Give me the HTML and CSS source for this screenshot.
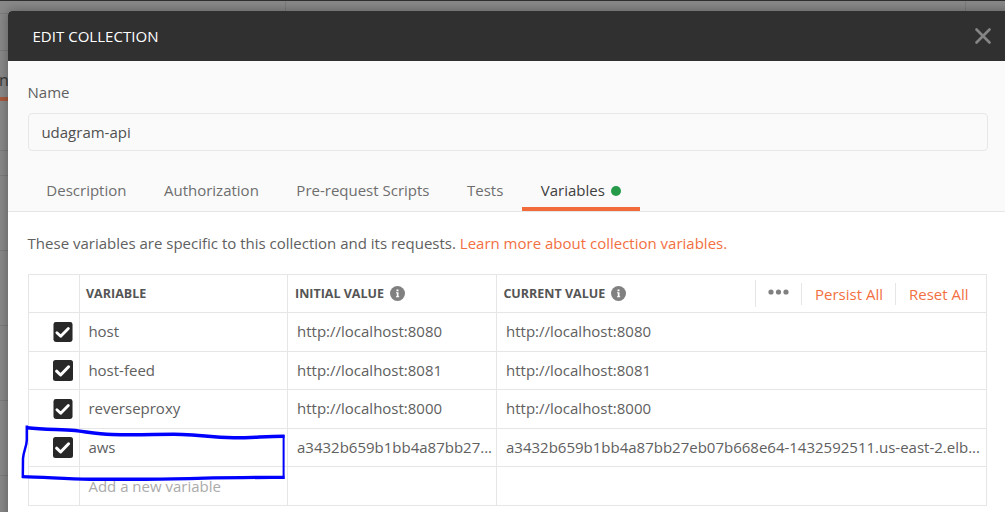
FILE: index.html
```html
<!DOCTYPE html>
<html lang="en">
<head>
<meta charset="utf-8">
<title>Edit collection</title>
<link rel="stylesheet" href="styles.css">
</head>
<body>
<svg class="defs" width="0" height="0">
  <symbol id="check" viewBox="0 0 20 21">
    <rect width="20" height="21" rx="2.5" fill="#282828"/>
    <path d="M3.6 11.2 7.6 15 15.6 6.8" fill="none" stroke="#fff" stroke-width="3" stroke-linecap="round" stroke-linejoin="round"/>
  </symbol>
  <symbol id="info" viewBox="0 0 15 15">
    <circle cx="7.5" cy="7.5" r="7.5" fill="#808080"/>
    <path d="M6.5 3.6h2v1.6h-2zM6 6.3h2.5v3.9h.7v1H6v-1h.8V7.3H6z" fill="#fff"/>
  </symbol>
</svg>
<div class="backdrop">
  <div class="edge"></div>
  <div class="bar b1"></div>
  <div class="bar b2"></div>
  <div class="bar b3"><span class="bg-tab">n</span></div>
  <div class="bar b4"></div>
  <div class="bar b5"></div>
  <div class="bar b5"></div>
  <div class="bar b5"></div>
  <div class="bar b5"></div>
  <i class="vline v1"></i><i class="vline v2"></i>
</div>
<main class="modal">
  <header class="modal-head">
    <h1><span>EDIT COLLECTION</span></h1>
    <svg class="close" width="16" height="16" viewBox="0 0 16 16"><path d="M1.5 1.5 14.5 14.5M14.500 1.500 1.500 14.500" stroke="#858585" stroke-width="2.6" stroke-linecap="round"/></svg>
  </header>
  <section class="top">
    <label class="label">Name</label>
    <div class="field">udagram-api</div>
    <nav class="tabs">
      <a class="tab">Description</a>
      <a class="tab">Authorization</a>
      <a class="tab">Pre-request Scripts</a>
      <a class="tab">Tests</a>
      <a class="tab active">Variables<i class="dot"></i></a>
    </nav>
  </section>
  <section class="content">
    <p class="intro">These variables are specific to this collection and its requests. <a>Learn more about collection variables.</a></p>
    <div class="table">
      <div class="row head">
        <div class="cell"></div>
        <div class="cell">VARIABLE</div>
        <div class="cell"><span class="h-init">INITIAL VALUE</span><svg width="15" height="15"><use href="#info"/></svg></div>
        <div class="cell"><span class="h-cur">CURRENT VALUE</span><svg width="15" height="15"><use href="#info"/></svg>
          <div class="actions">
            <span class="more"><svg width="21" height="6" viewBox="0 0 21 6"><g fill="#808080"><circle cx="3" cy="3" r="2.6"/><circle cx="10.5" cy="3" r="2.6"/><circle cx="18" cy="3" r="2.6"/></g></svg></span>
            <a class="persist">Persist All</a>
            <a class="reset">Reset All</a>
          </div>
        </div>
      </div>
      <div class="row tall"><div class="cell"><svg class="box" width="20" height="20"><use href="#check"/></svg></div><div class="cell">host</div><div class="cell">http://localhost:8080</div><div class="cell">http://localhost:8080</div></div>
      <div class="row"><div class="cell"><svg class="box" width="20" height="21"><use href="#check"/></svg></div><div class="cell">host-feed</div><div class="cell">http://localhost:8081</div><div class="cell">http://localhost:8081</div></div>
      <div class="row tall"><div class="cell"><svg class="box" width="20" height="20"><use href="#check"/></svg></div><div class="cell">reverseproxy</div><div class="cell">http://localhost:8000</div><div class="cell">http://localhost:8000</div></div>
      <div class="row"><div class="cell"><svg class="box" width="20" height="21"><use href="#check"/></svg></div><div class="cell">aws</div><div class="cell">a3432b659b1bb4a87bb27...</div><div class="cell">a3432b659b1bb4a87bb27eb07b668e64-1432592511.us-east-2.elb...</div></div>
      <div class="row tall"><div class="cell"></div><div class="cell hint">Add a new variable</div><div class="cell"></div><div class="cell"></div></div>
    </div>
  </section>
</main>
<svg class="marker" width="270" height="60" viewBox="18 422 270 60" fill="none" stroke="#0000fe">
  <path stroke-width="2.5" d="M26.8 425.5V440C26.8 446 23.5 451 23 458.500L22.800 478"/>
  <path stroke-width="3.500" d="M27 427.700C45 430 60 429 75 430.400C88 432 98 434.300 112 434.500C140 435.300 160 434 182 434.400C203 435 210 437.500 234 437.800C252 438 266 436.200 284.500 436.300"/>
  <path stroke-width="2" d="M283.600 435V479"/>
  <path stroke-width="3.400" d="M22 476.600C45 477 65 479 90 479.200H145C190 479 225 477 284.500 477.400"/>
</svg>
</body>
</html>
```
FILE: styles.css
```css
* { box-sizing: border-box; }
body {
  margin: 0;
  width: 1005px;
  height: 512px;
  overflow: hidden;
  position: relative;
  font: 15px/20px "Open Sans", sans-serif;
  color: #606060;
}
.defs { position: absolute; }

.backdrop { position: absolute; inset: 0; background: #898989; }
.edge { height: 1px; background: #303030; }
.bar { border-bottom: 1px solid #7c7c7c; }
.b1 { height: 13px; }
.b2 { height: 37px; }
.b3 { height: 100px; padding-top: 19px; }
.b4 { height: 25px; }
.b5 { height: 75px; }
.bg-tab { display: block; width: 8px; height: 31px; border-bottom: 4px solid #a85a3e; color: #383838; font-size: 16px; line-height: 20px; text-indent: -1px; }
.vline { position: absolute; top: 1px; width: 1px; height: 12px; background: #7c7c7c; }
.v1 { left: 285px; }
.v2 { left: 965px; }

.modal {
  position: absolute;
  left: 8px;
  top: 11px;
  width: 1010px;
  height: 510px;
  background: #fff;
  border-radius: 4px 4px 0 0;
  box-shadow: 0 0 12px rgba(0, 0, 0, .35);
  overflow: hidden;
}
.modal-head {
  display: flex;
  align-items: center;
  justify-content: space-between;
  height: 50px;
  padding: 0 27px 0 24px;
  background: #303030;
}
.modal-head h1 { margin: 0; font-size: 15px; font-weight: 500; color: #fff; letter-spacing: .04px; text-indent: .4px; }

.top { height: 151px; padding: 21px 30px 0 20px; background: #fafafa; border-bottom: 1px solid #e6e6e6; }
.label { display: block; height: 31px; text-indent: -.5px; }
.field {
  width: 960px;
  height: 38px;
  padding: 8px 12px;
  border: 1px solid #e8e8e8;
  border-radius: 4px;
  color: #505050;
  text-indent: .4px;
}
.tabs { display: flex; height: 60px; padding-top: 23px; }
.tab { padding: 6px 18.75px 0; color: #6e6e6e; }
.tab:first-child { text-indent: -.4px; }
.tab.active { display: flex; height: 37px; color: #404040; border-bottom: 4px solid #f26b3a; }
.dot { width: 10px; height: 10px; margin: 6px 0 0 6px; border-radius: 50%; background: #259b4a; }

.content { padding: 21px 0 0 20px; }
.intro { margin: 0; height: 41px; white-space: nowrap; text-indent: -.4px; }
.intro a, .actions a { color: #f2703f; }

.table { width: 959px; border-top: 1px solid #e6e6e6; }
.row { display: grid; grid-template-columns: 52px 208px 209px 490px; height: 38px; }
.row.tall { height: 39px; }
.cell {
  display: flex;
  align-items: center;
  padding: 0 0 2px 9px;
  border-right: 1px solid #e6e6e6;
  border-bottom: 1px solid #e6e6e6;
  white-space: nowrap;
}
.cell:nth-child(2) { padding-left: 8.4px; }
.cell:first-child { padding: 0 0 0 24px; border-left: 1px solid #e6e6e6; }
.head .cell { padding: 0 0 0 7px; font-size: 12.5px; font-weight: 700; color: #555; }
.head .cell:nth-child(2) { padding-left: 6px; }
.head .cell:nth-child(4) { padding-left: 6.4px; }
.head .cell svg { flex: none; }
.head .cell > svg { margin-left: 6px; }
.cell.hint { padding-bottom: 0; color: #ababab; }
.actions { display: flex; align-items: center; margin-left: auto; font-size: 15px; font-weight: 400; }
.more { display: flex; width: 46px; height: 27px; padding: 9px 0 0 12px; border-left: 1px solid #e6e6e6; }
.persist, .reset { height: 22px; border-left: 1px solid #e6e6e6; padding-left: 13px; line-height: 22px; }
.persist { width: 94px; }
.reset { width: 91px; }

.marker { position: absolute; left: 18px; top: 422px; }
```
